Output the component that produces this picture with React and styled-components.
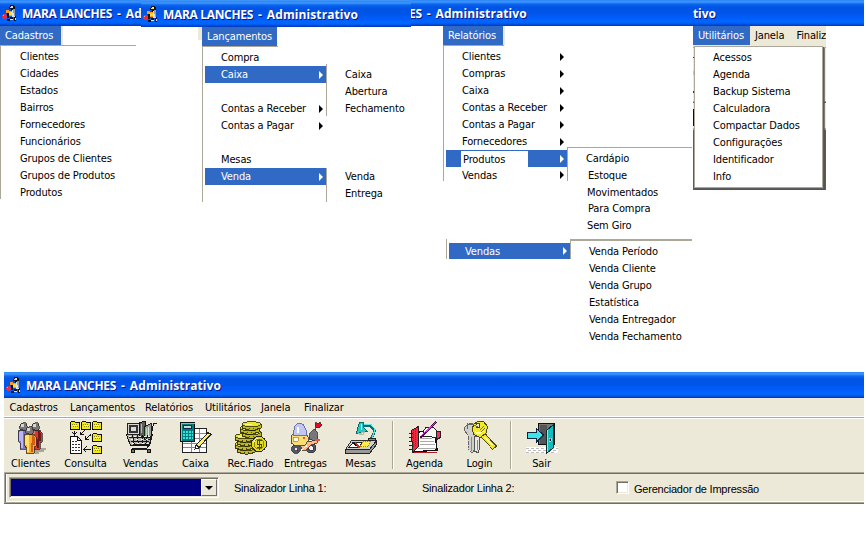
import React from "react";
import styled, { createGlobalStyle } from "styled-components";

const Global = createGlobalStyle`
  * { box-sizing: border-box; }
  body { margin: 0; background: #fff; overflow: hidden; }
`;
const tahoma = `"DejaVu Sans Condensed", "DejaVu Sans", sans-serif`;

const Page = styled.div`
  width: 866px; height: 555px; background: #fff; color: #000;
  font: 11px/17px ${tahoma};
  font-stretch: condensed;
  letter-spacing: -0.13px;
  white-space: nowrap;
`;
const Top = styled.div`
  display: grid; grid-template-columns: 141px 270px 282px 133px 38px; height: 372px;
`;
const Panel = styled.section`
  min-width: 0; padding-top: ${p => p.$drop || 0}px;
  background: ${p => p.$drop ? "linear-gradient(#3d93f8 1px, transparent 1px)" : "none"};
`;
const TitleBar = styled.header`
  display: flex; align-items: center; height: 26px; overflow: hidden;
  padding-left: ${p => p.$pad || 0}px;
  color: #fff; text-shadow: 1px 1px 0 #0a1883;
  font: bold 12px/27px "Open Sans", sans-serif; font-stretch: normal;
  background: linear-gradient(#2a86f5 0, #3f97ff 2px, #0c66ee 4px, #0055e5 7px, #0054e6 12px, #005cfb 18px, #0066ff 21px, #0062f8 23px, #0043cf 25px, #0038b4 26px);
  svg { flex: none; margin-right: 4px; }
`;
const Word = styled.span`
  flex: none; letter-spacing: ${p => p.$ls}px; white-space: pre;
  margin-left: ${p => p.$ml || 0}px;
`;
const Body = styled.div`
  display: flex; align-items: flex-start; margin-left: ${p => p.$x || 0}px;
`;
const Column = styled.div`
  display: flex; flex-direction: column; align-items: flex-start; width: ${p => p.$w}px;
`;
const Stub = styled.i`
  width: ${p => p.$w}px; height: ${p => p.$h}px; background: #ece9d8;
`;
const MenuHead = styled.div`
  flex: none; width: ${p => p.$w}px; height: 19px; line-height: 19px; padding-left: 5px;
  color: #fff; background: #316ac5; box-shadow: ${p => p.$edge ? "2px 0 #ece9d8" : "none"};
`;
const MenuList = styled.div`
  width: ${p => p.$w}px; height: ${p => p.$h}px;
  border-left: 1px solid #aca899; padding-top: ${p => p.$pt || 0}px;
`;
const SecondList = styled(MenuList)`margin-top: 58px;`;
const Rule = styled.div`
  width: ${p => p.$w}px; height: 1px; background: #aca899;
`;
const Item = styled.div`
  display: flex; align-items: center; justify-content: space-between;
  height: ${p => p.$h || 17}px; margin-left: 2px; width: 121px;
  padding: 0 3px 0 ${p => p.$pad ?? 16}px;
  color: ${p => p.$on ? "#fff" : "#000"};
  background: ${p => p.$on ? "#316ac5" : "transparent"};
`;
const Arrow = styled.i`
  border: solid transparent; border-width: 4px 0 4px 4px; border-left-color: currentColor;
`;
const SubMenu = styled.div`
  width: ${p => p.$w || 100}px; height: ${p => p.$h}px; margin-top: ${p => p.$mt || 0}px;
  padding: ${p => p.$pt || 0}px 0 0 18px;
  border-left: 1px solid #aca899;
  border-top: ${p => p.$line ? `${p.$line}px solid #aca899` : "none"};
`;
const SubItem = styled.div`
  height: ${p => p.$h || 17}px; padding-left: ${p => p.$dx || 0}px;
`;
const WhitePatch = styled.span`
  width: 67px; height: 16px; padding-left: 2px; margin-top: 1px; color: #000; background: #fff;
`;
const Reports = styled.div`
  margin-left: 32px; display: flex; flex-direction: column; width: 250px;
`;
const MenuStrip = styled.nav`
  display: flex; height: 20px; background: #ece9d8; overflow: hidden; line-height: 20px;
`;
const StripText = styled.span`
  padding-left: ${p => p.$pad}px;
`;
const Backdrop = styled.div`
  width: 133px; height: 144px; padding: 0 0 2px 1px;
  background:
    linear-gradient(transparent 11px, #333 11px 12px, transparent 12px 25px, #d9d42a 25px 29px, transparent 29px 45px, #333 45px 47px, transparent 47px 63px, #000080 63px 80px, transparent 80px) 0 0 / 1px 100% no-repeat,
    linear-gradient(#ece9d8 0 1px, #aca899 1px 2px, #ece9d8 2px 55px, #aca899 55px 56px, #555 56px 57px, #ece9d8 57px 82px, #aca899 82px 84px, #5c5c5c 84px);
`;
const Popup = styled.div`
  width: 129px; height: 142px; padding: 2px 0 0 18px; background: #fff;
  border: 1px solid #aca899; box-shadow: inset 0 0 0 0 #fff, 1px 1px #5c5c5c, 2px 2px rgba(80, 80, 76, .7);
`;

const Window = styled.main`
  width: 860px; margin-left: 4px; background: #ece9d8;
`;
const MenuBar = styled.nav`
  display: flex; height: 19px; line-height: 20px;
`;
const MenuEntry = styled.span`
  width: ${p => p.$w}px; padding-left: 5.5px;
`;
const ToolBar = styled.div`
  display: flex; height: 55px; padding-top: 3px;
  border-top: 1px solid #aca899; box-shadow: 0 -1px #fff, inset 0 1px #fff;
`;
const Tool = styled.button`
  display: flex; flex-direction: column; align-items: center; width: 55px; padding: 0;
  border: 0; background: none; color: #000; font: inherit; letter-spacing: -0.13px;
  margin-left: ${p => p.$shift || 0}px;
  svg { display: block; width: 34px; height: 34px; flex: none; }
`;
const Divider = styled.i`
  width: 2px; height: 48px; margin: 0 ${p => p.$r}px 0 ${p => p.$l}px;
  border-left: 1px solid #aca899; border-right: 1px solid #fff;
`;
const StatusBar = styled.div`
  display: flex; align-items: flex-start; height: 31px; padding: 4px 0 0 3px;
  border: solid #aca899; border-width: 1px 0 1px 1px;
  box-shadow: inset 0 1px #716f64, inset 1px 0 #716f64, inset 2px 0 #fff, inset 0 -1px #fff, 0 1px #716f64;
  font: 11px/22px "Liberation Sans", Arial, sans-serif;
`;
const Combo = styled.div`
  display: flex; justify-content: flex-end; width: 210px; height: 21px; margin-left: 1px;
  border: 1px solid; border-color: #aca899 #fff #fff #aca899;
  box-shadow: inset 1px 1px #716f64, inset -1px -1px #ece9d8; padding: 1px;
  background: #000080;
`;
const ComboButton = styled.i`
  display: grid; place-items: center; width: 16px; height: 17px; background: #ece9d8;
  border: 1px solid; border-color: #fff #716f64 #716f64 #fff;
  &::after { content: ""; border: solid transparent; border-width: 4px 4px 0; border-top-color: #000; }
`;
const Field = styled.span`
  width: ${p => p.$w}px; margin-left: ${p => p.$l}px; letter-spacing: ${p => p.$ls || 0}px;
  padding-top: ${p => p.$dy || 0}px;
`;
const Check = styled.i`
  width: 13px; height: 13px; margin-top: 4px; background: #fff;
  border: 1px solid; border-color: #aca899 #fff #fff #aca899; box-shadow: inset 1px 1px #716f64, inset -1px -1px #ece9d8;
`;

const Courier = () => (
  <svg width="16" height="16" viewBox="0 0 16 16" shapeRendering="crispEdges">
    <path fill="#111" d="M8 0h4v1h1v4h-2v1h-2V4H7V2h1zM5 7h2v6H5zM8 12h3v2H8zM12 11h2v5h-2zM5 14h3v2H5z" />
    <path fill="#d6e4f0" d="M9 1h2v2H9zM10 5h3v7h-3zM8 14h3v1H8zM13 13h1v2h-1z" />
    <path fill="#999" d="M11 4h2v7h-1z" />
    <path fill="#ff9a17" d="M4 5h3v1h3v5H7V8H4z" /><path fill="#ffdc35" d="M7 7h3v3H7zM8 2h2v1H8z" />
    <path fill="#ef2a34" d="M1 9h3v1h1v3H4v1H1v-1H0v-3h1z" /><path fill="#ff9b8c" d="M1 10h1v1H1z" />
  </svg>
);
const Title = () => (<><Word $ls={-0.33}>MARA LANCHES</Word><Word $ls={0} $ml={5}>-</Word><Word $ls={0.1} $ml={5}>Administrativo</Word></>);

const Frame = ({ children }) => <svg viewBox="0 0 34 34" shapeRendering="crispEdges">{children}</svg>;
const Person = ({ x, y, light, mid, dark }) => (
  <g transform={`translate(${x} ${y})`} stroke="#222" strokeWidth=".7">
    <path fill={mid} d="M2 8h9l2 3v9l-2 1v6H3v-6l-2-2v-8z" />
    <path stroke="none" fill={light} d="M3 9h3v17H4v-7H2v-7z" />
    <path stroke="none" fill={dark} d="M9 9h2l1 3v7h-2v7H8z" />
    <circle cx="6.5" cy="4.5" r="4" fill="#777" /><circle cx="5.4" cy="3.3" r="1.8" fill="#d7d7cf" stroke="none" />
  </g>
);
const Clients = () => <Frame>
  <path fill="#aaa797" d="M25 27h7v2h-2v2h-5v2H15v-3z" />
  <Person x={3} y={1} light="#bab3ff" mid="#8075bd" dark="#433d72" />
  <Person x={15} y={1} light="#ff775f" mid="#d23a36" dark="#731719" />
  <Person x={9} y={5} light="#ffe16d" mid="#ffa72c" dark="#d25e12" />
</Frame>;
const Folder = ({ x, y }) => <g transform={`translate(${x} ${y})`}>
  <path fill="#f0e81c" stroke="#111" d="M.5 8.500v-7l1-1h3l1 1h4v7z" /><path stroke="#8b8710" strokeDasharray="1 1" d="M2 3.5h6M3 5.5h6" /><path stroke="#fffbb0" d="M3 4.500h4" />
</g>;
const Query = () => <Frame>
  {[1, 12, 23].map(x => <Folder key={x} x={x} y={0} />)}<Folder x={23} y={12} /><Folder x={23} y={24} />
  <path fill="#fff" stroke="#111" d="M1.5 15.5h7l4 4v13h-11zM8.500 15.500v4h4" />
  <path stroke="#333" strokeDasharray="2 1" d="M3 20.5h5M3 23.500h8M3 26.500h8M3 29.500h8" />
  <path fill="none" stroke="#111" d="M5.500 9.500v5M3.500 11.500l2 2 2-2M15.500 9.500l-4 4v-3M11.500 13.500h3M22 13.500l-6 5v-4M16 18.500h4M22 28.500h-7M17.500 25.500l-3 3 3 3" />
</Frame>;
const Sales = () => <Frame>
  <path fill="#b9b7ad" stroke="#161616" d="M2.500 13.500h26l-3 11h-19z" />
  <path fill="#d8d8d0" stroke="#222" d="M3.500 2.500h12v11h-12z" /><path fill="#333" d="M5 4h9v8H5z" /><path fill="#d8d8d8" d="M7 6h5v4H7z" />
  <path fill="#5f5f5f" stroke="#111" d="M15.500 1.500l6-1v15h-6z" /><path stroke="#b8b8b8" d="M17.500 3v9" />
  <path fill="#9a9a98" stroke="#222" d="M20.500 5.500l7-3v16h-7z" /><path stroke="#aee0b1" d="M22.500 7v9" /><path stroke="#e5e5df" d="M24.500 6v10" />
  <path fill="none" stroke="#171717" strokeWidth="1" d="M33 2.500h-3.500l-4 21-3 4H8M5 16.500h22M7 20.500h18M9 23.500h16M8.500 14l2 11M13.500 14l1 11M18.500 14v11M23.500 14l-2 11" />
  <path stroke="#f4f4ef" strokeDasharray="2 3" d="M5 15.500h21M7 18.500h19M8 22.500h17" />
  <circle cx="9" cy="30" r="2" fill="#777" stroke="#111" /><circle cx="25" cy="30" r="2" fill="#777" stroke="#111" /><path stroke="#222" d="M10 28.500h14" />
</Frame>;
const Cash = () => <Frame>
  <path fill="#fff" stroke="#222" d="M3.500 7.500h24v24h-24z" /><path fill="none" stroke="#888" d="M4 22.500h23M4 26.500h23M12.500 8v23M20.500 8v23M15 12.500h12M15 17.500h12" />
  <path fill="#007c7c" stroke="#111" d="M1.500 1.500h14v19h-14z" /><path fill="none" stroke="#42dfdc" d="M2.500 20V2.500h13" /><path fill="#b9dfd3" stroke="#124" d="M4.500 4.500h8v3h-8z" />
  <path stroke="#39e2dc" strokeWidth="2" strokeDasharray="2 1" d="M4 11h10M4 14h10M4 17h10" />
  <path stroke="#222" strokeWidth="4.500" d="M18 26L31 12" /><path stroke="#fff35d" strokeWidth="2.500" d="M19 24.500L30 13" /><path fill="#fff" stroke="#222" d="M16 28l1-4 3 3z" />
</Frame>;
const Coin = ({ x, y, w = 18 }) => <g transform={`translate(${x} ${y})`}>
  <path fill="#c0b91a" stroke="#1a1a00" strokeWidth=".8" d={`M0 2v4q${w / 2} 4.500 ${w} 0V2z`} /><ellipse cx={w / 2} cy="2.200" rx={w / 2} ry="2.500" fill="#ece62e" stroke="#282700" strokeWidth=".8" />
  <path stroke="#fffa8c" d="M3 2.500h7" /><path stroke="#4a4600" strokeDasharray="1 3" d={`M3 6.500h${w - 5}`} />
</g>;
const Coins = () => <Frame>
  {[25, 21, 17, 13].map((y, i) => <Coin key={y} x={i % 2 ? 1 : 3} y={y} />)}
  {[9, 5, 1].map((y, i) => <Coin key={y} x={i === 1 ? 6 : 8} y={y} w={19} />)}
  <circle cx="25" cy="23" r="7.500" fill="#e3dc20" stroke="#222" /><circle cx="25" cy="23" r="5" fill="none" stroke="#8a8410" /><path fill="none" stroke="#4c4900" d="M27.500 19.500h-4v3.500h4v3.500h-5M25.500 18v11" /><path fill="none" stroke="#fffb9a" d="M19.500 22q1-4 4-5" />
</Frame>;
const Delivery = () => <Frame>
  <g stroke="#333" strokeWidth=".8"><circle cx="7" cy="28" r="4.500" fill="#56566a" /><circle cx="7" cy="28" r="2" fill="#e8e8f0" /><circle cx="22" cy="27" r="5" fill="#56566a" /><circle cx="22" cy="27" r="2.500" fill="#eef" />
    <path fill="#ffb888" d="M10 20h13l7-2-2 4-6 2-5 5h-4z" /><path fill="#77767a" d="M21 12l4-4 3 3 1 7-4 2-5-2z" />
    <path fill="#f8df78" d="M2 16q1-4 5-4h10l3 6-4 6-9 1-5-3z" /><path fill="#c3c6f2" stroke="#5358a0" d="M4 14Q4 3 11 2q6 1 7 12l-3 1q-4-2-8 0z" /><path fill="#fffbe1" stroke="#c1882e" d="M4 16h5v4H4z" />
    <path fill="#f05632" stroke="none" d="M14 16h2v2h-2zM26 18h5v2h-5z" /><path stroke="#222" d="M26 9l2-5" /><path fill="#e70720" d="M26 1.500l3 1 2-1.500 2 3-3 3-4-1z" />
  </g><path stroke="#fff" strokeWidth="2" d="M9 12V6" /><path stroke="#fff" d="M12 29.500l6-5" />
</Frame>;
const Desk = () => <Frame>
  <path fill="#d0d0cc" stroke="#333" d="M7.500 19.500h25l-7 9h-24z" /><path fill="#999" stroke="#222" d="M1.500 28.500h24l7-9v4l-7 9h-24z" /><path fill="#fff" stroke="#222" d="M9 21.500h9l-3 5H5z" /><path fill="#ffee4c" stroke="#9d8217" strokeDasharray="1 1" d="M19 20.500h8l-3 5h-8z" />
  <path stroke="#df2a23" strokeWidth="1.500" d="M11 22l5 5" /><path stroke="#111" d="M9 22l4 3" /><path fill="none" stroke="#126a70" strokeWidth="2.500" d="M19 4.500h7l5 5-4 9" /><path fill="none" stroke="#60e5e5" d="M19 3.500h8l4 5-3 9" />
  <path fill="#25c9c6" stroke="#126665" d="M15.500 1.500h4v5l4 4-11 2 1-5z" /><path stroke="#a9fffa" d="M17.500 3v6" /><path fill="#fff" stroke="#bba" d="M15 12.500l5-1-1 2h-3z" /><path fill="#27b6b8" stroke="#222" d="M24.500 17.500h7v2h-7z" />
</Frame>;
const Agenda = () => <Frame>
  <path fill="#fff" stroke="#111" strokeWidth="1.400" d="M8 11l19-1 2 19-24 2z" /><path stroke="#aaa" d="M12 17.500h12M12 20.500h14M12 23.500h15M10 27.500h18" />
  <path fill="#f02840" stroke="#222" d="M3.500 9.500l7-4v20l-6 6z" /><path stroke="#83234c" strokeDasharray="1 1" d="M5.500 9v17M7.500 8v17" /><path stroke="#222" strokeWidth="1" d="M1 12.500h4M1 16.500h4M1 20.500h4M1 24.500h4M1 28.500h4" />
  <path fill="#f9f9f4" stroke="#222" d="M15 11l3-5 8 1 4 4-2 6-8-2h-5z" /><path fill="#ff2a62" stroke="#222" d="M28.500 10.500h4v6l-4 2z" /><path stroke="#4b064b" strokeWidth="2.500" d="M12 17L28 1" /><path stroke="#d33cd0" d="M13 15L28 1" /><path stroke="#b21d2a" d="M6 31.500h23" />
</Frame>;
const Keys = () => <Frame>
  <path fill="#cfcfcb" stroke="#666" strokeDasharray="2 .6" d="M1 8l4-6h8l3 7-4 7v12l-3 4-4-4V15z" /><path fill="#e8e8e1" stroke="#555" d="M11.500 15.500h5v11l-1 5-4-1z" /><path stroke="#888" d="M8.500 16v14M14.500 19v10" />
  <path stroke="#4e4907" strokeWidth="6" d="M19 13l13 14" /><path stroke="#f1e52a" strokeWidth="4" d="M18 12l13 14.500" /><path fill="#f1e929" stroke="#4e4907" d="M10.500 3.500l4-3h6l4 5-1 6-6 5-7-3-1-6z" />
  <circle cx="15" cy="4.500" r="2" fill="#ece9d8" stroke="#4b4600" /><path fill="none" stroke="#fffcb2" strokeWidth="1.500" d="M12 11q4 3 8-1M22 16l7 8" /><path stroke="#777015" d="M17 9l4-4M18 11l4-4" /><path fill="none" stroke="#666" d="M5 8q-3-5 4-5l6 3" />
</Frame>;
const Exit = () => <Frame>
  <path fill="#fff" d="M1 26h32v6H1z" /><path fill="none" stroke="#bbb" strokeDasharray="3 2" d="M1 27.500h32M3 29.500h30M1 31.500h30" />
  <path fill="#777" stroke="#111" d="M13.500 2.500h16v21h-16z" /><path fill="#555" d="M15 4h7v19h-7z" />
  <path fill="#12bdbe" stroke="#102c2c" d="M21.500 9.500l7-6v23l-7 6z" /><path stroke="#72f4ee" d="M22.500 9v22" /><path fill="#222" stroke="#fff" strokeWidth=".5" d="M24 17h2v3h-2z" />
  <path fill="#39e7e5" stroke="#124" d="M2.500 11.500h9v-4l7 6.500-7 7v-4h-9z" />
</Frame>;

const Row = ({ children, arrow, ...p }) => <Item {...p}><span>{children}</span>{arrow && <Arrow />}</Item>;
const tools = [["Clientes", Clients], ["Consulta", Query], ["Vendas", Sales], ["Caixa", Cash], ["Rec.Fiado", Coins], ["Entregas", Delivery], ["Mesas", Desk]];
const ToolButton = ({ label, Icon, shift }) => <Tool $shift={shift}><Icon />{label}</Tool>;

export default function App() {
  return <Page><Global />
    <Top>
      <Panel>
        <TitleBar $pad={2}><Courier /><Word $ls={-0.33}>MARA LANCHES</Word><Word $ls={0} $ml={5}>-</Word><Word $ls={0.1} $ml={5}>Ad</Word></TitleBar>
        <MenuHead $w={61} $edge>Cadastros</MenuHead><Rule $w={136} />
        <MenuList $w={136} $h={153} $pt={2}>
          {["Clientes", "Cidades", "Estados", "Bairros", "Fornecedores", "Funcionários", "Grupos de Clientes", "Grupos de Produtos", "Produtos"].map(t => <Row key={t} $pad={17}>{t}</Row>)}
        </MenuList>
      </Panel>
      <Panel $drop={1}>
        <TitleBar $pad={2}><Courier /><Title /></TitleBar>
        <Body $x={57}>
          <Stub $w={4} $h={13} />
          <Column $w={124}>
            <MenuHead $w={75}>Lançamentos</MenuHead><Rule $w={76} />
            <MenuList $w={124} $h={155} $pt={2}>
              <Row>Compra</Row><Row $on arrow>Caixa</Row><Row /><Row arrow>Contas a Receber</Row><Row arrow>Contas a Pagar</Row><Row /><Row>Mesas</Row><Row $on arrow>Venda</Row>
            </MenuList>
          </Column>
          <Column $w={85}>
            <SubMenu $w={85} $mt={37} $h={52} $pt={2}><SubItem>Caixa</SubItem><SubItem>Abertura</SubItem><SubItem>Fechamento</SubItem></SubMenu>
            <SubMenu $w={85} $mt={52} $h={34}><SubItem>Venda</SubItem><SubItem>Entrega</SubItem></SubMenu>
          </Column>
        </Body>
      </Panel>
      <Panel>
        <TitleBar><Word $ls={-0.33} $ml={-2}>ES</Word><Word $ls={0} $ml={5}>-</Word><Word $ls={0.1} $ml={5}>Administrativo</Word></TitleBar>
        <Reports>
          <Body>
            <Column $w={124}>
              <MenuHead $w={60} $edge>Relatórios</MenuHead><Rule $w={61} />
              <MenuList $w={124} $h={135} $pt={2}>
                {["Clientes", "Compras", "Caixa", "Contas a Receber", "Contas a Pagar", "Fornecedores"].map(t => <Row key={t} arrow>{t}</Row>)}
                <Item $on $pad={15}><WhitePatch>Produtos</WhitePatch><Arrow /></Item><Row arrow $h={16}>Vendas</Row>
              </MenuList>
            </Column>
            <Column $w={126}>
              <SubMenu $w={125} $mt={121} $h={34} $pt={2} $line={1}>
                <SubItem>Cardápio</SubItem><SubItem $dx={2}>Estoque</SubItem><SubItem $dx={1} $h={16}>Movimentados</SubItem><SubItem $dx={2}>Para Compra</SubItem><SubItem $dx={1}>Sem Giro</SubItem>
              </SubMenu>
            </Column>
          </Body>
          <Body $x={3}>
            <SecondList $w={124} $h={20} $pt={4}><Row $on arrow $h={16}>Vendas</Row></SecondList>
            <SubMenu $w={122} $mt={58} $h={20} $pt={2} $line={2}>
              {["Venda Período", "Venda Cliente", "Venda Grupo", "Estatística", "Venda Entregador", "Venda Fechamento"].map(t => <SubItem key={t}>{t}</SubItem>)}
            </SubMenu>
          </Body>
        </Reports>
      </Panel>
      <Panel>
        <TitleBar><Word $ls={-0.1}>tivo</Word></TitleBar>
        <MenuStrip><MenuHead $w={57}>Utilitários</MenuHead><StripText $pad={5}>Janela</StripText><StripText $pad={12}>Finaliz</StripText></MenuStrip>
        <Backdrop><Popup>{["Acessos", "Agenda", "Backup Sistema", "Calculadora", "Compactar Dados", "Configurações", "Identificador", "Info"].map(t => <SubItem key={t}>{t}</SubItem>)}</Popup></Backdrop>
      </Panel>
      <Panel><TitleBar /></Panel>
    </Top>
    <Window>
      <TitleBar $pad={2}><Courier /><Title /></TitleBar>
      <MenuBar>{[["Cadastros", 60.5], ["Lançamentos", 75], ["Relatórios", 60], ["Utilitários", 56], ["Janela", 43], ["Finalizar", 60]].map(([t, w]) => <MenuEntry key={t} $w={w}>{t}</MenuEntry>)}</MenuBar>
      <ToolBar>
        {tools.map(([t, I], i) => <ToolButton key={t} label={t} Icon={I} shift={i ? 0 : -1} />)}
        <Divider $l={4} $r={3} /><ToolButton label="Agenda" Icon={Agenda} /><ToolButton label="Login" Icon={Keys} />
        <Divider $l={3} $r={2} /><ToolButton label="Sair" Icon={Exit} />
      </ToolBar>
      <StatusBar><Combo><ComboButton /></Combo><Field $l={15} $w={188} $ls={-0.22}>Sinalizador Linha 1:</Field><Field $l={0} $w={194} $ls={-0.22}>Sinalizador Linha 2:</Field><Check /><Field $l={5} $w={130} $ls={-0.22} $dy={1}>Gerenciador de Impressão</Field></StatusBar>
    </Window>
  </Page>;
}
